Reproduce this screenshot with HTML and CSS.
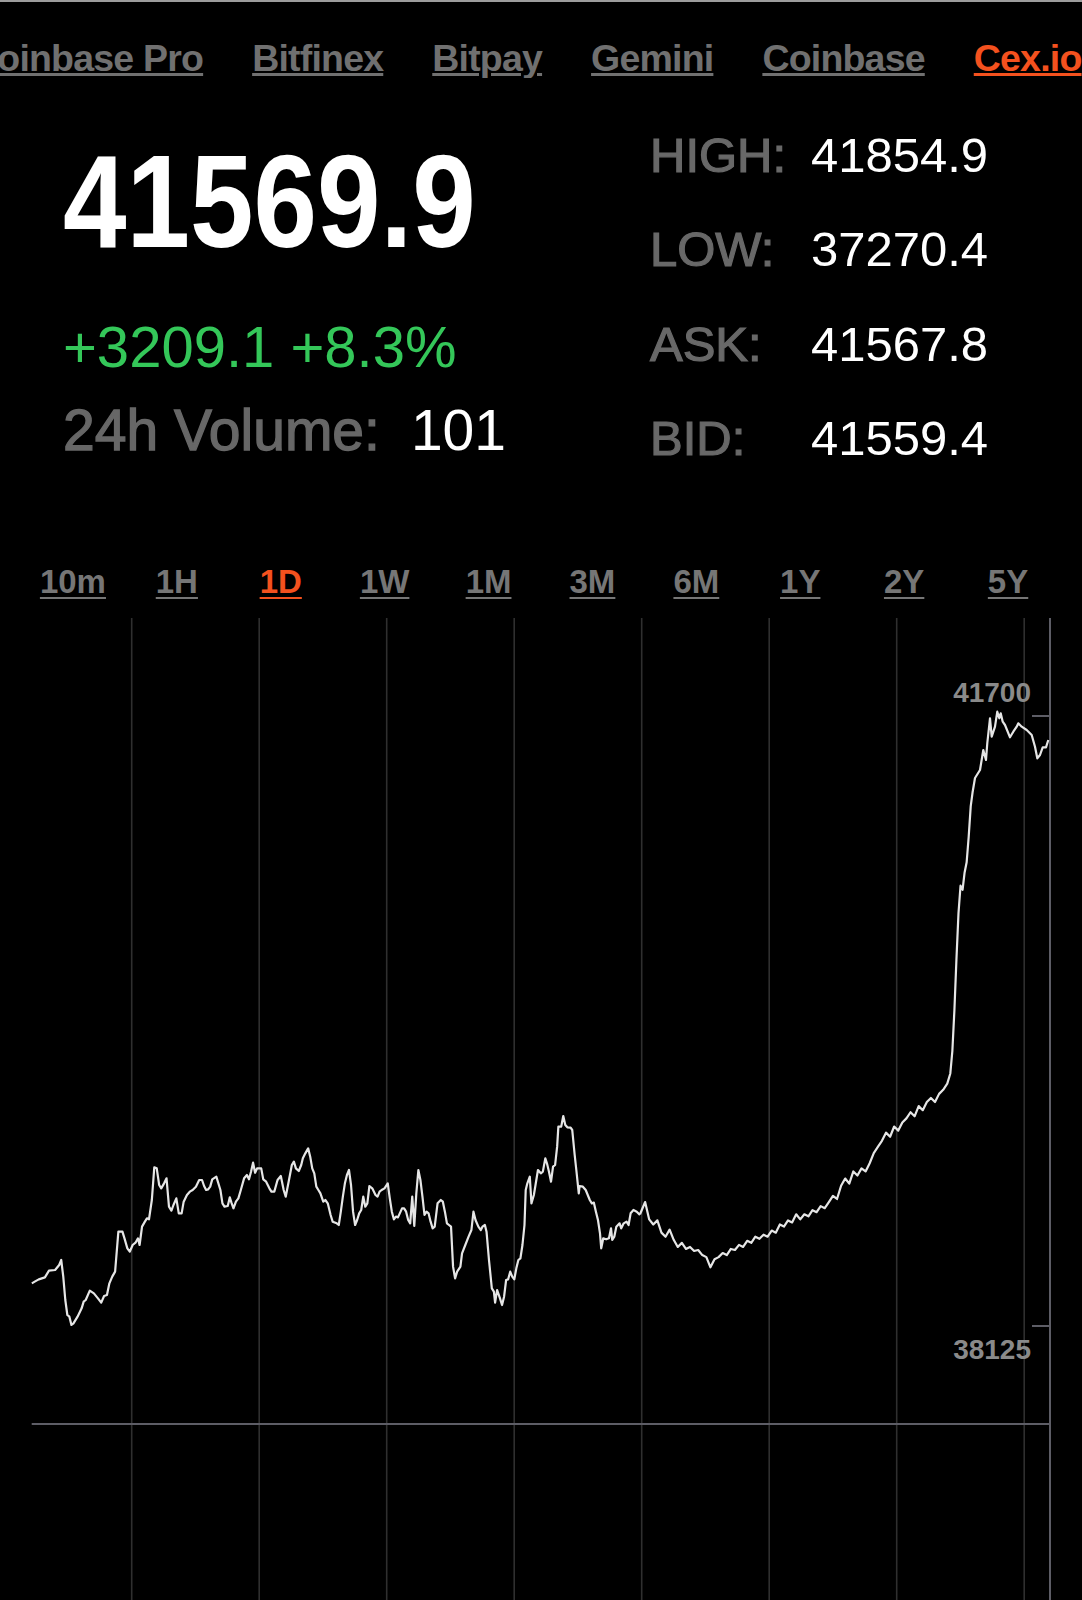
FILE: index.html
```html
<!DOCTYPE html>
<html>
<head>
<meta charset="utf-8">
<link rel="stylesheet" href="styles.css">
</head>
<body>
<div class="page">
  <nav class="exchanges">
    <div class="ex-track">
      <a class="ex">Coinbase Pro</a>
      <a class="ex">Bitfinex</a>
      <a class="ex">Bitpay</a>
      <a class="ex">Gemini</a>
      <a class="ex">Coinbase</a>
      <a class="ex ex-active">Cex.io</a>
    </div>
  </nav>

  <section class="hero">
    <div class="hero-left">
      <div class="price"><span class="price-num">41569.9</span></div>
      <div class="change">+3209.1 +8.3%</div>
      <div class="volume"><span class="vol-label">24h Volume:</span><span class="vol-value">101</span></div>
    </div>
    <div class="hero-right">
      <div class="stat"><span class="stat-label">HIGH:</span><span class="stat-value">41854.9</span></div>
      <div class="stat"><span class="stat-label">LOW:</span><span class="stat-value">37270.4</span></div>
      <div class="stat"><span class="stat-label">ASK:</span><span class="stat-value">41567.8</span></div>
      <div class="stat"><span class="stat-label">BID:</span><span class="stat-value">41559.4</span></div>
    </div>
  </section>

  <nav class="periods">
    <a class="period">10m</a>
    <a class="period">1H</a>
    <a class="period period-active">1D</a>
    <a class="period">1W</a>
    <a class="period">1M</a>
    <a class="period">3M</a>
    <a class="period">6M</a>
    <a class="period">1Y</a>
    <a class="period">2Y</a>
    <a class="period">5Y</a>
  </nav>

  <div class="chart">
    <svg class="chart-svg" width="1082" height="990" viewBox="0 610 1082 990" xmlns="http://www.w3.org/2000/svg">
      <g class="grid">
        <line x1="131.7" y1="618" x2="131.7" y2="1600"/>
        <line x1="259.2" y1="618" x2="259.2" y2="1600"/>
        <line x1="386.7" y1="618" x2="386.7" y2="1600"/>
        <line x1="514.2" y1="618" x2="514.2" y2="1600"/>
        <line x1="641.7" y1="618" x2="641.7" y2="1600"/>
        <line x1="769.2" y1="618" x2="769.2" y2="1600"/>
        <line x1="896.7" y1="618" x2="896.7" y2="1600"/>
        <line x1="1024.2" y1="618" x2="1024.2" y2="1600"/>
      </g>
      <g class="axis">
        <line x1="1050" y1="618" x2="1050" y2="1600"/>
        <line x1="1032" y1="716" x2="1050" y2="716"/>
        <line x1="1032" y1="1326" x2="1050" y2="1326"/>
        <line x1="31.7" y1="1424" x2="1050" y2="1424"/>
      </g>
      <text class="axis-label" x="1031" y="702" text-anchor="end">41700</text>
      <text class="axis-label" x="1031" y="1359" text-anchor="end">38125</text>
      <g class="price-line">
        <polyline transform="translate(0,1080) scale(0.408163,0.333333)" vector-effect="non-scaling-stroke" points="78,610 85,605 95,598 110,592 120,572 135,570 145,555 150,540 155,590 160,660 165,705 170,710 175,735 180,730 190,710 200,685 205,665 210,660 220,632 230,640 240,655 248,668 255,648 262,645 268,610 275,590 282,575 290,455 300,455 305,475 312,505 318,515 325,495 332,488 338,475 342,495 348,440 355,425 360,415 365,418 372,360 378,262 384,265 390,315 395,325 402,310 408,295 414,380 420,392 425,375 432,355 438,400 445,400 450,365 458,345 465,335 472,330 480,320 488,300 495,300 500,318 505,330 510,328 515,320 520,298 530,290 540,330 545,370 550,380 558,378 563,352 567,368 572,385 578,365 584,355 590,330 598,295 605,285 610,298 615,275 620,248 625,278 630,265 640,265 645,298 652,305 660,325 665,335 672,335 680,300 688,288 695,330 700,350 708,300 715,255 720,245 725,265 732,273 738,255 742,235 748,220 755,205 760,230 765,265 770,280 775,320 780,330 785,340 792,365 797,360 803,370 810,405 815,425 825,430 830,435 835,395 840,350 845,310 850,285 855,270 860,315 865,395 870,435 875,420 880,400 885,390 890,350 895,380 900,370 905,318 912,325 920,345 925,350 930,335 935,330 942,325 950,310 955,355 960,395 965,418 970,410 975,412 985,385 990,385 995,395 1000,420 1005,430 1010,350 1015,438 1020,340 1025,270 1030,300 1035,350 1040,405 1045,395 1050,400 1055,425 1060,445 1065,440 1072,370 1080,360 1085,365 1090,395 1095,430 1100,435 1105,440 1110,560 1115,595 1120,575 1128,560 1132,520 1140,495 1148,470 1155,450 1160,395 1165,420 1172,440 1178,450 1182,440 1188,435 1192,455 1198,540 1205,625 1210,635 1213,668 1218,630 1225,655 1230,675 1235,650 1240,600 1245,598 1250,575 1255,590 1260,598 1265,565 1270,540 1275,535 1280,495 1285,435 1288,330 1292,310 1298,290 1302,370 1308,345 1312,315 1318,270 1325,280 1330,275 1336,235 1340,250 1345,275 1350,305 1355,260 1360,255 1365,200 1368,140 1375,140 1380,108 1385,135 1390,142 1398,143 1402,150 1408,225 1412,270 1418,340 1420,318 1428,320 1435,330 1440,345 1445,360 1450,370 1455,368 1460,395 1465,420 1470,460 1473,505 1478,475 1485,478 1492,475 1497,445 1500,480 1505,470 1510,440 1518,430 1522,445 1528,430 1535,425 1540,435 1545,400 1552,390 1560,395 1568,405"/>
        <polyline transform="scale(1.02075,1.0204)" vector-effect="non-scaling-stroke" points="627,1190 632,1178 636,1195 640,1200 644,1196 648,1208 652,1212 656,1205 660,1215 664,1222 668,1218 672,1224 676,1222 680,1226 684,1225 688,1230 692,1232 696,1242 700,1234 704,1232 708,1228 712,1230 716,1224 720,1225 724,1220 728,1222 732,1216 736,1218 740,1212 744,1214 748,1210 752,1212 756,1206 760,1208 764,1200 768,1202 772,1196 776,1198 780,1190 784,1195 788,1190 792,1192 796,1186 800,1188 804,1182 808,1184 812,1178 816,1172 820,1175 824,1162 828,1155 832,1160 836,1148 840,1152 844,1145 848,1148 852,1140 856,1130 860,1124 864,1118 868,1110 872,1114 876,1104 880,1108 884,1100 888,1096 892,1090 896,1094 900,1084 904,1088 908,1080 912,1076 916,1080 920,1072 924,1068 928,1062 931,1052 933,1030 935,990 937,940 939,895 941,868 943,872 945,855 947,845 949,820 951,790 953,775"/>
        <polyline points="972.8,791 975,778 980,770 983.3,750 986,760 987.3,743 990,718.3 991.7,736.7 995,726.7 997.3,711.7 999.3,718.3 1000.7,713.3 1002.7,721.7 1005,725 1010,737.3 1013.3,731.7 1016.7,726.7 1018.3,723.3 1021.7,726.7 1026.7,730 1031.7,735 1035,746.7 1037.3,758.3 1040,755 1042.7,747.3 1046,747.3 1048.3,740"/>
      </g>
    </svg>
  </div>
</div>
</body>
</html>
```

FILE: styles.css
```css
html, body {
  margin: 0;
  padding: 0;
  background: #000;
}

body {
  font-family: "Liberation Sans", Arial, sans-serif;
  color: #fff;
}

.page {
  width: 1082px;
  height: 1600px;
  overflow: hidden;
  background: #000;
}

/* Exchange tabs */
.exchanges {
  border-top: 2px solid #9c9c9c;
  padding-top: 38px;
  height: 37.5px;
  overflow: hidden;
  white-space: nowrap;
}

.ex-track {
  display: flex;
  gap: 49px;
  margin-left: -29px;
}

.ex {
  flex: none;
  font-size: 37.5px;
  line-height: 1;
  font-weight: 700;
  letter-spacing: -0.8px;
  color: #707070;
  text-decoration: underline;
  text-decoration-thickness: 2.5px;
  text-underline-offset: 2px;
}

.ex-active {
  color: #f4511e;
}

/* Hero */
.hero {
  display: flex;
}

.hero-left {
  width: 587px;
  padding-left: 63px;
  flex: none;
}

.price {
  margin-top: 58px;
  height: 132px;
}

.price-num {
  display: inline-block;
  font-size: 132px;
  line-height: 1;
  font-weight: 700;
  color: #fff;
  transform: scaleX(0.865);
  transform-origin: left center;
}

.change {
  margin-top: 50px;
  font-size: 58px;
  line-height: 1;
  color: #34c759;
}

.volume {
  margin-top: 26px;
  display: flex;
  gap: 31px;
  font-size: 57px;
  line-height: 1;
}

.vol-label {
  color: #676767;
  -webkit-text-stroke: 1.3px #676767;
}

.vol-value {
  color: #fff;
}

.hero-right {
  padding-top: 53px;
  display: flex;
  flex-direction: column;
  gap: 45.5px;
}

.stat {
  display: grid;
  grid-template-columns: 161px auto;
  font-size: 49px;
  line-height: 1;
  height: 49px;
}

.stat-label {
  color: #686868;
  -webkit-text-stroke: 1.2px #686868;
}

.stat-value {
  color: #fff;
}

/* Period tabs */
.periods {
  margin-top: 102px;
  padding-left: 21px;
  width: 1039px;
  display: grid;
  grid-template-columns: repeat(10, 1fr);
  height: 33px;
}

.period {
  text-align: center;
  font-size: 33px;
  line-height: 1;
  font-weight: 700;
  color: #767676;
  text-decoration: underline;
  text-decoration-thickness: 2px;
  text-underline-offset: 4px;
}

.period-active {
  color: #f4511e;
}

/* Chart */
.chart {
  margin-top: 12px;
  height: 990px;
}

.chart-svg {
  display: block;
}

.grid line {
  stroke: #2f2f2f;
  stroke-width: 1.6;
}

.axis line {
  stroke: #5d5d66;
  stroke-width: 2;
}

.axis-label {
  font-family: "Liberation Sans", Arial, sans-serif;
  font-size: 28px;
  font-weight: 700;
  fill: #8a8a8a;
}

.price-line polyline {
  fill: none;
  stroke: #e6e6e6;
  stroke-width: 2.2;
  stroke-linejoin: round;
}
```
